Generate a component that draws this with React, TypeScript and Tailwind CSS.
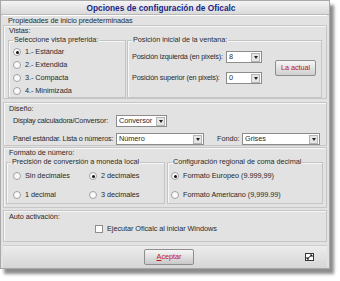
import React from 'react';

const Radio = ({ checked, label }: { checked?: boolean; label: string }) => (
    <div className="flex items-center gap-[4px] h-[8px]">
        <span className="w-[8px] h-[8px] shrink-0 rounded-full bg-[#fafafa] border border-[#a0a0a0] flex items-center justify-center">
            {checked && <span className="w-[3px] h-[3px] rounded-full bg-[#111]" />}
        </span>
        <span>{label}</span>
    </div>
);

const Combo = ({ value, className }: { value: string; className: string }) => (
    <div className={`h-[12px] shrink-0 bg-white border border-[#8c8c8c] flex items-center ${className}`}>
        <span className="flex-1 pl-[2px] leading-none">{value}</span>
        <span className="w-[9px] h-[9px] mr-[1px] bg-[#e6e6e6] border border-[#b4b4b4] flex items-center justify-center">
            <span className="w-0 h-0 border-l-[2px] border-r-[2px] border-t-[3px] border-l-transparent border-r-transparent border-t-[#222]" />
        </span>
    </div>
);

const SubGroup = ({ label, className, children }: { label: string; className?: string; children: React.ReactNode }) => (
    <fieldset className={`border border-[#c4c4c4] shadow-[inset_1px_1px_0_#f6f6f6] px-[3px] ${className ?? ''}`}>
        <legend className="px-[1px] ml-[1px] leading-[8px]">{label}</legend>
        {children}
    </fieldset>
);

export default function App() {
    return (
        <div className="w-[340px] h-[281px] bg-white font-['Liberation_Sans',sans-serif] text-[7.3px] leading-[8px] tracking-[-0.05px] whitespace-nowrap text-[#2a2a2a]">
            <div className="w-[330px] h-[269px] bg-[#e2e2e2] border border-[#a8a8a8] shadow-[4px_5px_3px_rgba(0,0,0,0.45)] flex flex-col">
                {/* Title bar */}
                <div className="h-[14px] bg-gradient-to-b from-[#f4f4f4] to-[#d9d9d9] border-b border-[#b9b9b9] flex items-center justify-center">
                    <span className="font-bold text-[8.3px] tracking-normal text-[#1b2585] pr-[8px]">Opciones de configuración de Oficalc</span>
                </div>

                <div className="flex-1 flex flex-col px-[2px]">
                    {/* Propiedades */}
                    <div className="border-t border-white">
                        <div className="h-[7px] leading-[7px] pl-[5px] mt-[1px]">Propiedades de inicio predeterminadas</div>
                        <div className="mt-[1px] h-[74px] border border-[#c6c6c6] shadow-[inset_1px_1px_0_#f6f6f6] flex flex-col px-[1px]">
                            <div className="pl-[4px] pt-[1px]">Vistas:</div>
                            <div className="flex mt-[1px] h-[63px]">
                                <SubGroup label="Seleccione vista preferida:" className="w-[118px] shrink-0 ml-[3px]">
                                    <div className="flex flex-col gap-[5px] pt-[4px] pl-[1px]">
                                        <Radio checked label="1.- Estándar" />
                                        <Radio label="2.- Extendida" />
                                        <Radio label="3.- Compacta" />
                                        <Radio label="4.- Minimizada" />
                                    </div>
                                </SubGroup>
                                <SubGroup label="Posición inicial de la ventana:" className="flex-1 ml-[1px] mr-[3px]">
                                    <div className="flex items-center h-full pb-[6px]">
                                        <div className="flex flex-col gap-[9px] pl-[1px] tracking-[-0.2px]">
                                            <div className="flex items-center">
                                                <span className="w-[94px] shrink-0">Posición izquierda (en pixels):</span>
                                                <Combo value="8" className="w-[36px]" />
                                            </div>
                                            <div className="flex items-center">
                                                <span className="w-[94px] shrink-0">Posición superior (en pixels):</span>
                                                <Combo value="0" className="w-[36px]" />
                                            </div>
                                        </div>
                                        <button className="ml-[13px] w-[41px] h-[16px] shrink-0 rounded-[2px] border border-[#8e8e8e] bg-gradient-to-b from-[#f6f6f6] to-[#cfcfcf] text-[#c0161c] text-[7.3px]">
                                            La actual
                                        </button>
                                    </div>
                                </SubGroup>
                            </div>
                        </div>
                    </div>

                    {/* Diseño */}
                    <div className="mt-[3px] h-[44px] border border-[#c6c6c6] shadow-[inset_1px_1px_0_#f6f6f6] flex flex-col">
                        <div className="pl-[5px] pt-[2px]">Diseño:</div>
                        <div className="flex items-center mt-[2px] pl-[9px]">
                            <span className="w-[103px] shrink-0 tracking-[-0.2px]">Display calculadora/Conversor:</span>
                            <Combo value="Conversor" className="w-[51px]" />
                        </div>
                        <div className="flex items-center mt-[6px] pl-[9px]">
                            <span className="w-[103px] shrink-0 tracking-[-0.2px]">Panel estándar. Lista o números:</span>
                            <Combo value="Número" className="w-[88px]" />
                            <span className="ml-[13px] w-[25px] shrink-0">Fondo:</span>
                            <Combo value="Grises" className="w-[78px]" />
                        </div>
                    </div>

                    {/* Formato de número */}
                    <div className="mt-[1px] h-[61px] border border-[#c6c6c6] shadow-[inset_1px_1px_0_#f6f6f6] flex flex-col">
                        <div className="pl-[5px] pt-[1px]">Formato de número:</div>
                        <div className="flex h-[46px] mt-[1px]">
                            <SubGroup label="Precisión de conversión a moneda local" className="w-[159px] shrink-0 ml-[2px]">
                                <div className="grid grid-cols-[76px_1fr] gap-y-[11px] pt-[6px] pl-[3px]">
                                    <Radio label="Sin decimales" />
                                    <Radio checked label="2 decimales" />
                                    <Radio label="1 decimal" />
                                    <Radio label="3 decimales" />
                                </div>
                            </SubGroup>
                            <SubGroup label="Configuración regional de coma decimal" className="flex-1 ml-[2px] mr-[3px]">
                                <div className="flex flex-col gap-[11px] pt-[6px]">
                                    <Radio checked label="Formato Europeo (9.999,99)" />
                                    <Radio label="Formato Americano (9,999.99)" />
                                </div>
                            </SubGroup>
                        </div>
                    </div>

                    {/* Auto activación */}
                    <div className="mt-[2px] h-[32px] border border-[#c6c6c6] shadow-[inset_1px_1px_0_#f6f6f6] flex flex-col">
                        <div className="pl-[5px] pt-[2px]">Auto activación:</div>
                        <div className="flex items-center mt-[4px] pl-[91px] gap-[4px]">
                            <span className="w-[8px] h-[8px] bg-white border border-[#8e8e8e]" />
                            <span>Ejecutar Oficalc al iniciar Windows</span>
                        </div>
                    </div>

                    {/* Bottom bar */}
                    <div className="mt-[3px] flex-1 border-t border-[#cfcfcf] bg-gradient-to-b from-[#ececec] to-[#d6d6d6] flex items-center relative">
                        <div className="flex-1 flex justify-center pl-[8px]">
                            <button className="w-[50px] h-[16px] rounded-[2px] border border-[#8e8e8e] bg-gradient-to-b from-[#f6f6f6] to-[#c9c9c9] text-[#c0161c] text-[7.3px]">
                                <span className="underline">A</span>ceptar
                            </button>
                        </div>
                        <span className="absolute right-[13px] w-[9px] h-[8px] bg-white border border-[#333] flex items-center justify-center">
                            <svg width="7" height="6" viewBox="0 0 7 6">
                                <path d="M1 5 L6 1 M4 1 H6 V3 M1 3 V5 H3" stroke="#111" strokeWidth="1" fill="none" />
                            </svg>
                        </span>
                    </div>
                </div>
            </div>
        </div>
    );
}
